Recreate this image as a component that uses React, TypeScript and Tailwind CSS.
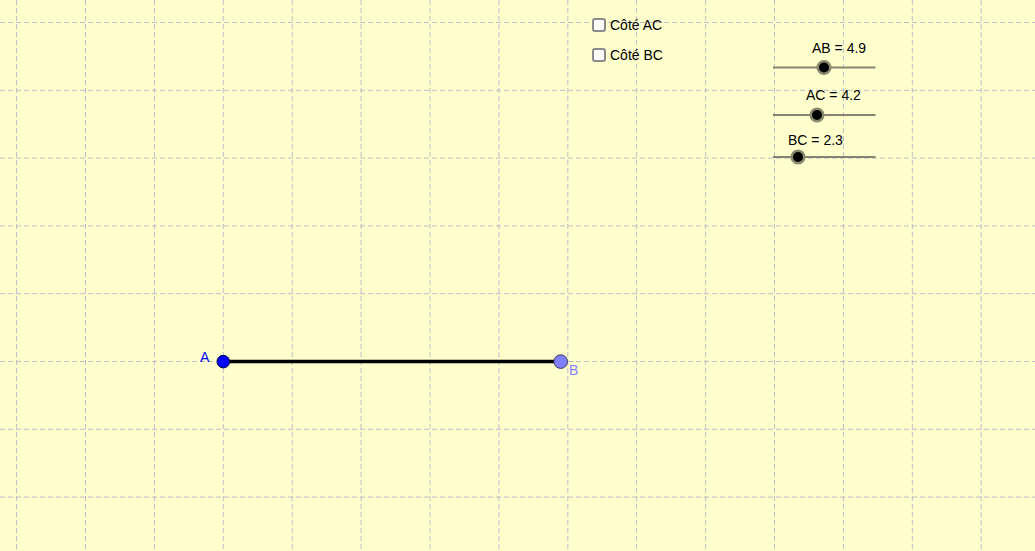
import React from 'react';

const W = 1035;
const H = 551;

// grid spacing read off the applet
const gridX = Array.from({ length: 16 }, (_, i) => 16.6 + i * 68.9);
const gridY = Array.from({ length: 9 }, (_, i) => 22.5 + i * 67.8);

const sliders = [
  { label: 'AB = 4.9', y: 67.5, knob: 824, textX: 812, textY: 53 },
  { label: 'AC = 4.2', y: 115, knob: 817, textX: 806, textY: 100 },
  { label: 'BC = 2.3', y: 157, knob: 798, textX: 788, textY: 145 },
];

const checkboxes = [
  { label: 'Côté AC', top: 18 },
  { label: 'Côté BC', top: 48 },
];

const App: React.FC = () => {
  return (
    <div className="relative w-[1035px] h-[551px] overflow-hidden bg-[#ffffce] font-['Liberation_Sans',Arial,sans-serif]">
      <svg width={W} height={H} className="absolute inset-0">
        {gridX.map((x) => (
          <line key={`v${x}`} x1={x} y1={0} x2={x} y2={H} stroke="#bdbdc6" strokeWidth={1} strokeDasharray="5 3" />
        ))}
        {gridY.map((y) => (
          <line key={`h${y}`} x1={0} y1={y} x2={W} y2={y} stroke="#bdbdc6" strokeWidth={1} strokeDasharray="5 3" />
        ))}

        {/* segment AB */}
        <line x1={223.3} y1={361.6} x2={560.7} y2={361.6} stroke="#000" strokeWidth={3.5} />
        <circle cx={223.3} cy={361.6} r={6.3} fill="#0000ff" stroke="#00003a" strokeWidth={1} />
        <circle cx={560.7} cy={361.6} r={6.8} fill="#7f7fff" stroke="#3a3a5a" strokeWidth={1} />
        <text x={200} y={362} fontSize={14} fill="#0000ff" fontFamily="Liberation Sans, Arial, sans-serif">A</text>
        <text x={569} y={374.5} fontSize={14} fill="#7f7fff" fontFamily="Liberation Sans, Arial, sans-serif">B</text>

        {/* sliders */}
        {sliders.map((s) => (
          <g key={s.label}>
            <line x1={773} y1={s.y} x2={875.5} y2={s.y} stroke="#85856f" strokeWidth={2} />
            <circle cx={s.knob} cy={s.y} r={6.3} fill="#000" stroke="#8a8a70" strokeWidth={2.6} />
            <text x={s.textX} y={s.textY} fontSize={14} fill="#000" fontFamily="Liberation Sans, Arial, sans-serif">
              {s.label}
            </text>
          </g>
        ))}
      </svg>

      {checkboxes.map((c) => (
        <label key={c.label} className="absolute left-[592px] flex items-center gap-[4px] h-[14px] text-[14px] leading-none text-black" style={{ top: c.top }}>
          <span className="block w-[14px] h-[14px] rounded-[3px] border-2 border-[#8a8a8a] bg-[#fbfbf8]" />
          <span>{c.label}</span>
        </label>
      ))}
    </div>
  );
};

export default App;
